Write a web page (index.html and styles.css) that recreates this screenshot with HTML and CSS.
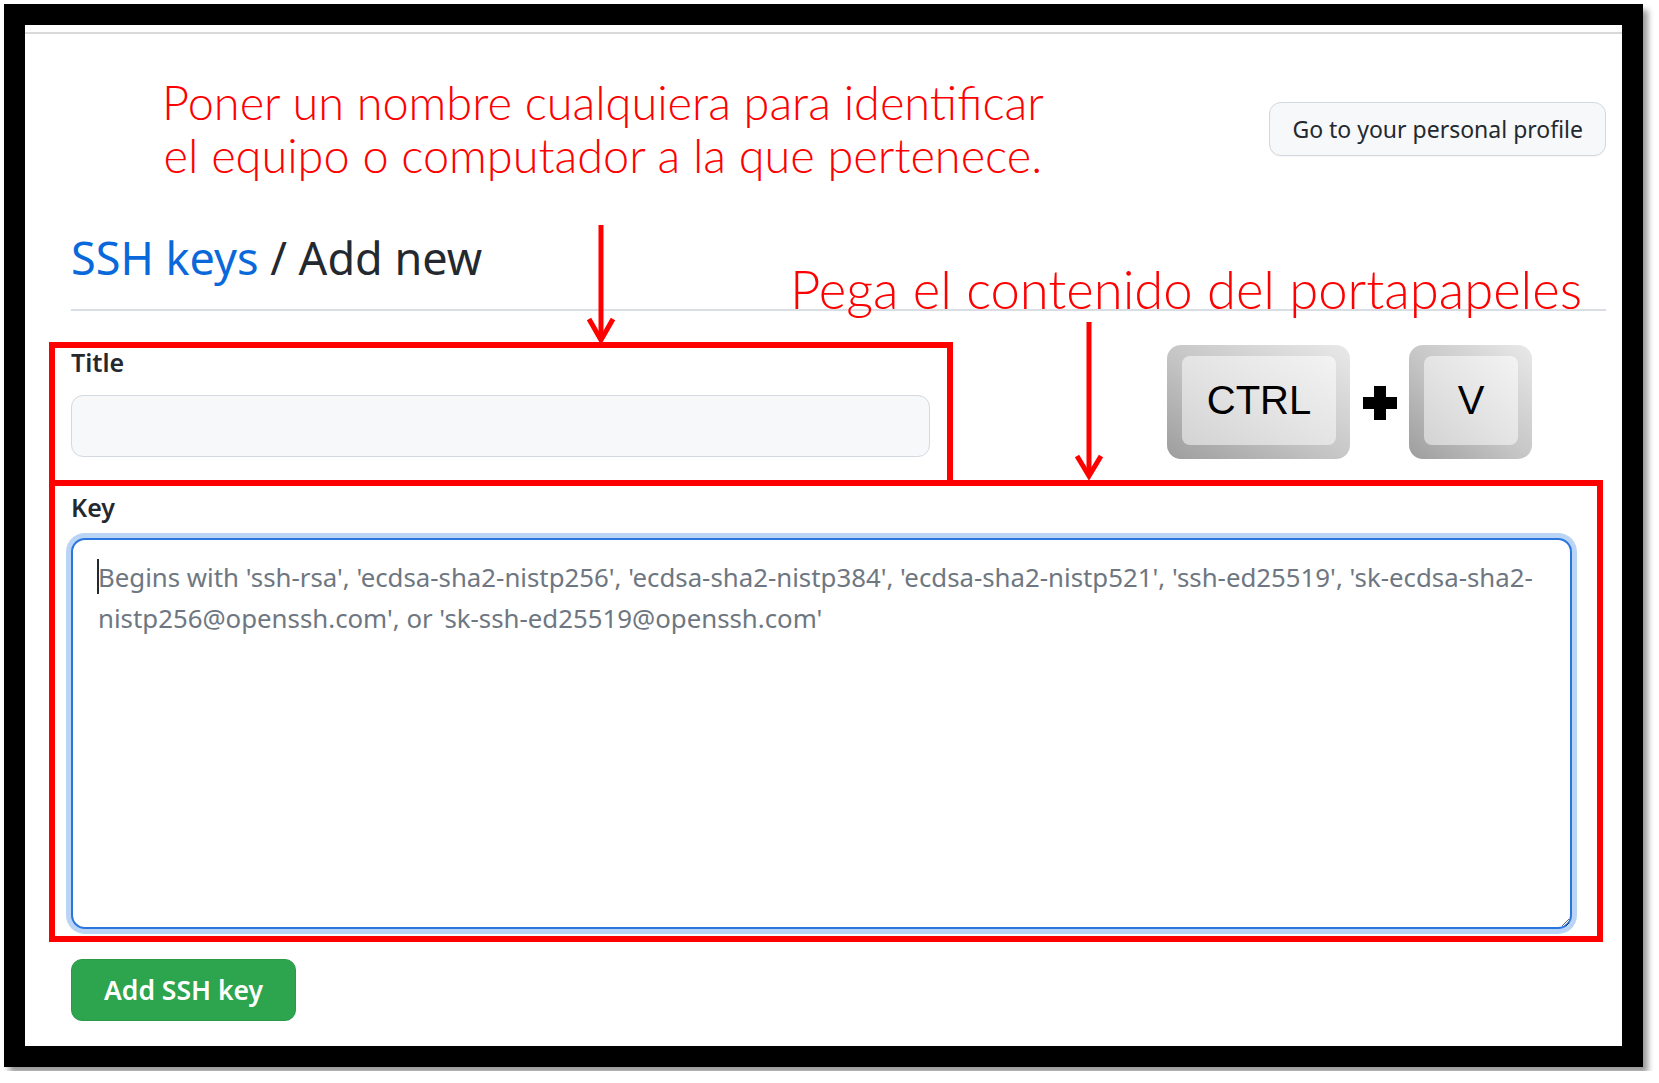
FILE: index.html
```html
<!DOCTYPE html>
<html lang="es">
<head>
<meta charset="utf-8">
<title>SSH keys / Add new</title>
<link rel="stylesheet" href="styles.css">
</head>
<body>
<div class="frame">
  <div class="sheet">
    <div class="top-rule"></div>
    <div class="content">
      <div class="head">
        <p class="note">Poner un nombre cualquiera para identificar<br>el equipo o computador a la que pertenece.</p>
        <button class="btn-profile" type="button">Go to your personal profile</button>
      </div>
      <div class="subhead">
        <h2 class="subhead-title"><a class="crumb" href="#">SSH keys</a> / Add new</h2>
      </div>
      <form class="ssh-form">
        <div class="form-group">
          <label class="form-label" for="title">Title</label>
          <input class="form-input" id="title" type="text">
        </div>
        <div class="form-group group-key">
          <label class="form-label" for="key">Key</label>
          <div class="ta-wrap">
            <textarea class="form-textarea" id="key" placeholder="Begins with 'ssh-rsa', 'ecdsa-sha2-nistp256', 'ecdsa-sha2-nistp384', 'ecdsa-sha2-nistp521', 'ssh-ed25519', 'sk-ecdsa-sha2-&#10;nistp256@openssh.com', or 'sk-ssh-ed25519@openssh.com'"></textarea>
            <span class="caret"></span>
          </div>
        </div>
        <button class="btn-primary" type="button">Add SSH key</button>
      </form>
    </div>

    <div class="mark mark-title"></div>
    <div class="mark mark-key"></div>
    <p class="note note-paste">Pega el contenido del portapapeles</p>
    <svg class="arrows" viewBox="25 25 1597 1021" width="1597" height="1021">
      <g fill="none" stroke="#ff0000" stroke-width="5">
        <line x1="601" y1="225" x2="601" y2="338"/>
        <polyline points="589,319 601,340 613,319"/>
        <line x1="1089" y1="322" x2="1089" y2="474"/>
        <polyline points="1077,456 1089,476 1101,456"/>
      </g>
    </svg>
    <div class="keys">
      <div class="keycap keycap-wide"><span class="keyface">CTRL</span></div>
      <svg class="plus" width="34" height="34" viewBox="0 0 34 34"><path d="M11 0h12v11h11v12h-11v11h-12v-11h-11v-12h11z" fill="#000"/></svg>
      <div class="keycap keycap-square"><span class="keyface">V</span></div>
    </div>
  </div>
</div>
</body>
</html>
```
FILE: styles.css
```css
html, body {
  margin: 0;
  padding: 0;
  background: #ffffff;
}
body {
  font-family: "Noto Sans", "Open Sans", sans-serif;
  color: #24292f;
}
.frame {
  margin: 4px;
  width: 1597px;
  height: 1021px;
  border: 21px solid #000;
  box-shadow: 5px 6px 6px rgba(0, 0, 0, 0.4);
}
.sheet {
  position: relative;
  width: 1597px;
  height: 1021px;
  background: #fff;
  overflow: hidden;
}
.top-rule {
  margin-top: 7px;
  height: 2px;
  background: #d9d9d9;
}
.content {
  padding: 0 16px 0 46px;
}
.head {
  margin-top: 42px;
  display: flex;
  justify-content: space-between;
  align-items: flex-start;
}
.note {
  margin: 0;
  font-family: Lato, "Liberation Sans", sans-serif;
  font-weight: 300;
  color: #ff0000;
  white-space: nowrap;
}
.head .note {
  margin-left: 91px;
  font-size: 46.9px;
  line-height: 53px;
  text-align: center;
}
.btn-profile {
  margin-top: 26px;
  height: 54px;
  padding: 0 22px;
  font-family: "Noto Sans", sans-serif;
  font-size: 23px;
  line-height: 52px;
  color: #24292f;
  background: #f6f8fa;
  border: 1px solid #d3d8de;
  border-radius: 12px;
  box-shadow: 0 1px 0 rgba(27, 31, 36, 0.04);
}
.subhead {
  margin-top: 48px;
  padding-bottom: 23px;
  border-bottom: 2px solid #d8dee4;
}
.subhead-title {
  margin: 0;
  font-size: 45px;
  font-weight: 400;
  line-height: 56px;
  color: #24292f;
}
.crumb {
  color: #0969da;
  text-decoration: none;
}
.ssh-form {
  margin: 0;
}
.form-group {
  margin-top: 33px;
}
.group-key {
  margin-top: 32px;
}
.form-label {
  display: block;
  font-size: 25px;
  font-weight: 600;
  line-height: 37px;
  color: #24292f;
}
.form-input {
  display: block;
  box-sizing: border-box;
  margin-top: 14px;
  width: 859px;
  height: 62px;
  background: #f6f8fa;
  border: 1px solid #d3d9df;
  border-radius: 12px;
  outline: none;
}
.ta-wrap {
  position: relative;
  margin-top: 12px;
  width: 1501px;
}
.form-textarea {
  display: block;
  box-sizing: border-box;
  width: 1501px;
  height: 391px;
  padding: 17px 20px 17px 25px;
  font-family: "Noto Sans", sans-serif;
  font-size: 25.8px;
  line-height: 40.5px;
  color: #24292f;
  background: #fff;
  border: 2px solid #2a76df;
  border-radius: 14px;
  box-shadow: 0 0 0 5px #b9d4f5;
  outline: none;
  resize: vertical;
}
.form-textarea::placeholder {
  color: #6e7781;
  opacity: 1;
}
.caret {
  position: absolute;
  left: 26px;
  top: 21px;
  width: 2px;
  height: 35px;
  background: #24292f;
}
.btn-primary {
  display: block;
  margin-top: 30px;
  width: 225px;
  height: 62px;
  padding: 0;
  font-family: "Noto Sans", sans-serif;
  font-size: 26.5px;
  font-weight: 600;
  color: #fff;
  background: #2da44e;
  border: 1px solid #2a9a49;
  border-radius: 11px;
}

/* annotation overlays */
.mark {
  position: absolute;
  box-sizing: border-box;
  border: 6px solid #ff0000;
}
.mark-title {
  left: 24px;
  top: 317px;
  width: 904px;
  height: 144px;
}
.mark-key {
  left: 24px;
  top: 455px;
  width: 1554px;
  height: 462px;
}
.note-paste {
  position: absolute;
  left: 765px;
  top: 238px;
  font-size: 52.6px;
  line-height: 52.6px;
}
.arrows {
  position: absolute;
  left: 0;
  top: 0;
  pointer-events: none;
}
.keys {
  position: absolute;
  left: 1142px;
  top: 320px;
  display: flex;
  align-items: center;
}
.plus {
  margin: 2px 12px 0 13px;
}
.keycap {
  box-sizing: border-box;
  height: 114px;
  padding: 11px 14px 14px 15px;
  border-radius: 14px;
  background: linear-gradient(to top right, #9d9d9d 0%, #c4c4c4 45%, #e9e9e9 100%);
}
.keycap-wide {
  width: 183px;
}
.keycap-square {
  width: 123px;
}
.keyface {
  display: flex;
  align-items: center;
  justify-content: center;
  height: 100%;
  border-radius: 8px;
  background: linear-gradient(to bottom left, #f3f3f3 0%, #e4e4e4 50%, #d3d3d3 100%);
  font-family: "Liberation Sans", Arial, sans-serif;
  font-size: 40px;
  color: #000;
}
```
